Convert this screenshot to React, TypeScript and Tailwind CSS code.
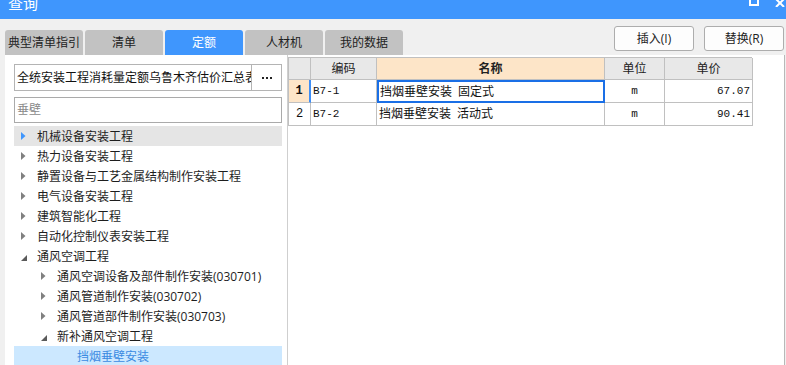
import React from "react";

const CJK = '"Open Sans", "Noto Sans CJK SC", "Microsoft YaHei", sans-serif';
const MONO = '"Liberation Mono", "Noto Sans CJK SC", monospace';

function Collapsed({ blue }: { blue?: boolean }) {
  return (
    <svg width="5" height="8" viewBox="0 0 5 8" className="block">
      <path d="M0 0 L4.5 4 L0 8 Z" fill={blue ? "#3f96fd" : "#808080"} />
    </svg>
  );
}

function Expanded() {
  return (
    <svg width="6" height="6" viewBox="0 0 6 6" className="block mt-[3px]">
      <path d="M6 0 L6 6 L0 6 Z" fill="#5a5a5a" />
    </svg>
  );
}

type Node = {
  label: string;
  level: 0 | 1 | 2;
  state: "collapsed" | "expanded" | "leaf";
  hover?: boolean;
  selected?: boolean;
};

const nodes: Node[] = [
  { label: "机械设备安装工程", level: 0, state: "collapsed", hover: true },
  { label: "热力设备安装工程", level: 0, state: "collapsed" },
  { label: "静置设备与工艺金属结构制作安装工程", level: 0, state: "collapsed" },
  { label: "电气设备安装工程", level: 0, state: "collapsed" },
  { label: "建筑智能化工程", level: 0, state: "collapsed" },
  { label: "自动化控制仪表安装工程", level: 0, state: "collapsed" },
  { label: "通风空调工程", level: 0, state: "expanded" },
  { label: "通风空调设备及部件制作安装(030701)", level: 1, state: "collapsed" },
  { label: "通风管道制作安装(030702)", level: 1, state: "collapsed" },
  { label: "通风管道部件制作安装(030703)", level: 1, state: "collapsed" },
  { label: "新补通风空调工程", level: 1, state: "expanded" },
  { label: "挡烟垂壁安装", level: 2, state: "leaf", selected: true },
];

const padByLevel = ["pl-[7px]", "pl-[27px]", "pl-[47px]"];

function TreeRow({ n }: { n: Node }) {
  const bg = n.selected ? "bg-[#cce8ff]" : n.hover ? "bg-[#e5e5e5]" : "";
  const color = n.selected ? "text-[#3b8be2]" : "text-[#1e1e1e]";
  return (
    <div className={`h-[20px] flex items-center ${padByLevel[n.level]} ${bg}`}>
      <div className="w-[16px] h-[20px] flex items-center">
        {n.state === "collapsed" && <Collapsed blue={n.hover} />}
        {n.state === "expanded" && <Expanded />}
      </div>
      <span className={`text-[12px] leading-none whitespace-nowrap pt-[2px] ${color}`}>{n.label}</span>
    </div>
  );
}

const tabs = ["典型清单指引", "清单", "定额", "人材机", "我的数据"];

export default function App() {
  return (
    <div
      className="w-[786px] h-[365px] bg-[#f0f0f0] overflow-hidden flex flex-col"
      style={{ fontFamily: CJK }}
    >
      {/* Title bar */}
      <div className="h-[19px] bg-[#3f96fd] flex justify-between overflow-hidden shrink-0">
        <div className="text-white text-[15px] leading-none ml-[8px] mt-[-4px]">查询</div>
        <div className="flex items-start mr-[1px]">
          <div className="w-[10px] h-[6px] border-2 border-t-0 border-white" />
          <svg width="10" height="7" viewBox="0 0 10 7" className="ml-[16px]">
            <path d="M1 -1 L9 7 M9 -1 L1 7" stroke="white" strokeWidth="2" />
          </svg>
        </div>
      </div>

      {/* Tabs + buttons */}
      <div className="h-[36px] flex justify-between shrink-0">
        <div className="flex items-end pl-[5px] gap-[2px]">
          {tabs.map((t) => (
            <div
              key={t}
              className={`w-[78px] h-[25px] rounded-t-[3px] flex items-center justify-center text-[12px] leading-none whitespace-nowrap overflow-hidden pt-[1px] ${
                t === "定额" ? "bg-[#3f96fd] text-white" : "bg-[#c2c2c2] text-[#222]"
              }`}
            >
              {t}
            </div>
          ))}
        </div>
        <div className="flex items-start pt-[7px] pr-[2px] gap-[10px]">
          <div className="w-[80px] h-[25px] bg-[#fdfdfd] border border-[#adadad] rounded-[3px] flex items-center justify-center text-[12px] text-[#222]">
            插入(I)
          </div>
          <div className="w-[80px] h-[25px] bg-[#fdfdfd] border border-[#adadad] rounded-[3px] flex items-center justify-center text-[12px] text-[#222]">
            替换(R)
          </div>
        </div>
      </div>

      {/* Main */}
      <div className="flex-1 flex min-h-0">
        {/* Left panel */}
        <div className="ml-[5px] w-[283px] bg-white border-r border-[#cfcfcf] pl-[9px] pr-[5px] pt-[9px] overflow-hidden">
          <div className="h-[27px] border border-[#b4b4b4] flex">
            <div className="flex-1 overflow-hidden whitespace-nowrap text-[12px] leading-[25px] pl-[2px] text-[#111]">
              全统安装工程消耗量定额乌鲁木齐估价汇总表
            </div>
            <div className="w-[30px] border-l border-[#b4b4b4] flex items-center justify-center gap-[2px]">
              <div className="w-[2px] h-[2px] bg-[#222]" />
              <div className="w-[2px] h-[2px] bg-[#222]" />
              <div className="w-[2px] h-[2px] bg-[#222]" />
            </div>
          </div>
          <div className="h-[26px] mt-[6px] border border-[#aaaaaa] text-[12px] leading-[24px] pl-[2px] text-[#8a8a8a]">
            垂壁
          </div>
          <div className="mt-[3px]">
            {nodes.map((n) => (
              <TreeRow key={n.label} n={n} />
            ))}
          </div>
        </div>

        {/* Right panel */}
        <div className="w-[497px] bg-white border-r border-[#b8b8b8] pt-[2px]">
          <div className="grid grid-cols-[22px_66px_228px_60px_88px] w-[464px] border-l border-t border-[#c0c0c0] text-[12px]">
            {/* header */}
            <div className="h-[22px] bg-[#e8e8e8] border-r border-b border-[#c0c0c0]" />
            <div className="h-[22px] bg-[#e8e8e8] border-r border-b border-[#c0c0c0] flex items-center justify-center text-[#222]">编码</div>
            <div className="h-[22px] bg-[#fde5c8] border-r border-b border-[#c0c0c0] flex items-center justify-center font-bold text-[#222]">名称</div>
            <div className="h-[22px] bg-[#e8e8e8] border-r border-b border-[#c0c0c0] flex items-center justify-center text-[#222]">单位</div>
            <div className="h-[22px] bg-[#e8e8e8] border-r border-b border-[#c0c0c0] flex items-center justify-center text-[#222]">单价</div>

            {/* row 1 */}
            <div className="h-[23px] bg-[#fde5c8] border-r-2 border-r-[#3f8ef5] border-b border-b-[#c0c0c0] flex items-center justify-center font-bold text-[#111]" style={{ fontFamily: MONO }}>1</div>
            <div className="h-[23px] border-r border-b border-[#c0c0c0] flex items-center pl-[2px] text-[11px] text-[#111]" style={{ fontFamily: MONO }}>B7-1</div>
            <div className="h-[23px] border-2 border-[#1a6fe6] flex items-center pl-[1px] text-[#111] whitespace-pre">挡烟垂壁安装{"\u2002"}固定式</div>
            <div className="h-[23px] border-r border-b border-[#c0c0c0] flex items-center justify-center text-[11px] text-[#111]" style={{ fontFamily: MONO }}>m</div>
            <div className="h-[23px] border-r border-b border-[#c0c0c0] flex items-center justify-end pr-[2px] text-[11px] text-[#111]" style={{ fontFamily: MONO }}>67.07</div>

            {/* row 2 */}
            <div className="h-[23px] border-r border-b border-[#c0c0c0] flex items-center justify-center text-[#111]" style={{ fontFamily: MONO }}>2</div>
            <div className="h-[23px] border-r border-b border-[#c0c0c0] flex items-center pl-[2px] text-[11px] text-[#111]" style={{ fontFamily: MONO }}>B7-2</div>
            <div className="h-[23px] border-r border-b border-[#c0c0c0] flex items-center pl-[2px] text-[#111] whitespace-pre">挡烟垂壁安装{"\u2002"}活动式</div>
            <div className="h-[23px] border-r border-b border-[#c0c0c0] flex items-center justify-center text-[11px] text-[#111]" style={{ fontFamily: MONO }}>m</div>
            <div className="h-[23px] border-r border-b border-[#c0c0c0] flex items-center justify-end pr-[2px] text-[11px] text-[#111]" style={{ fontFamily: MONO }}>90.41</div>
          </div>
        </div>
      </div>
    </div>
  );
}
